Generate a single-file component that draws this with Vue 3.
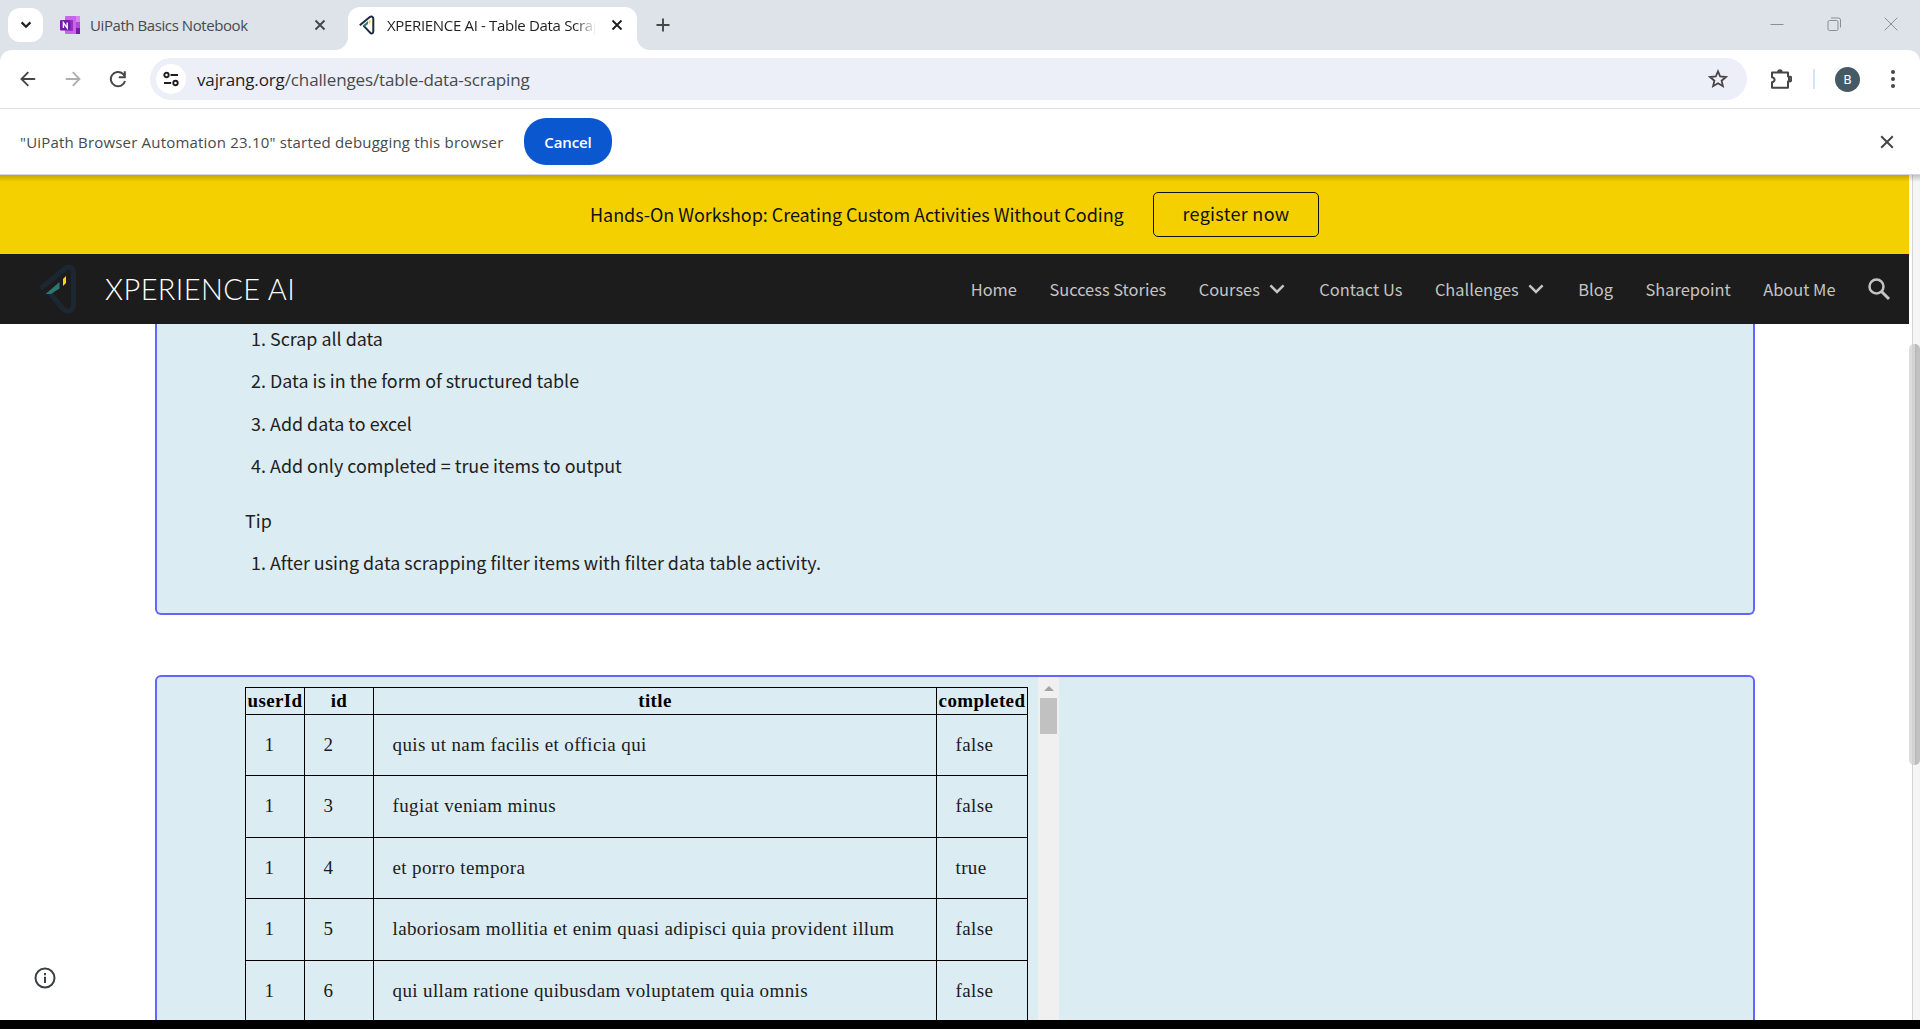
<script setup>
const menu = [
  { label: 'Home' },
  { label: 'Success Stories' },
  { label: 'Courses', more: true },
  { label: 'Contact Us' },
  { label: 'Challenges', more: true },
  { label: 'Blog' },
  { label: 'Sharepoint' },
  { label: 'About Me' },
]
const steps = [
  'Scrap all data',
  'Data is in the form of structured table',
  'Add data to excel',
  'Add only completed = true items to output',
]
const rows = [
  [1, 2, 'quis ut nam facilis et officia qui', false],
  [1, 3, 'fugiat veniam minus', false],
  [1, 4, 'et porro tempora', true],
  [1, 5, 'laboriosam mollitia et enim quasi adipisci quia provident illum', false],
  [1, 6, 'qui ullam ratione quibusdam voluptatem quia omnis', false],
]
</script>

<template>
  <div class="screen">
    <div class="tabs">
      <div class="tab-search">
        <svg width="12" height="12" viewBox="0 0 12 12"><path d="M1.600 3.400 6 7.800l4.400-4.400" fill="none" stroke="#1f1f1f" stroke-width="2.200" /></svg>
      </div>
      <div class="tab idle">
        <svg class="note" width="20" height="20" viewBox="0 0 20 20">
          <rect x="5" y="1" width="15" height="18" rx="1" fill="#ca64ea" />
          <rect x="16" y="1" width="4" height="6" fill="#d386ee" />
          <rect x="16" y="7" width="4" height="6" fill="#ae4bd5" />
          <rect x="16" y="13" width="4" height="6" fill="#7719aa" />
          <rect x="10" y="5" width="3" height="11" fill="#9332bf" />
          <rect x="0" y="5" width="10.500" height="10.500" rx="1" fill="#7719aa" />
          <path d="M3.400 13V7.600L7.200 13V7.600" fill="none" stroke="#fff" stroke-width="1.400" />
        </svg>
        <span class="tab-name">UiPath Basics Notebook</span>
        <svg class="x" width="12" height="12" viewBox="0 0 12 12"><path d="m1.500 1.500 9 9m0-9-9 9" stroke="#444746" stroke-width="1.900" /></svg>
      </div>
      <div class="tab active">
        <svg class="fav" width="17" height="20" viewBox="0 0 17 20">
          <path d="M.8 10.200 10.500 2.200C12.500.7 14.300 1.600 14.300 3.700v12.600c0 2.200-1.800 2.900-3.200 1.300L4.500 10.600" fill="none" stroke="#1d2b3a" stroke-width="2" />
          <path d="M3.500 10.800 9 6v3L5.500 11.800z" fill="#2f7f79" /><path d="m9.800 6 1.700-1.200v3L9.800 9z" fill="#f5d800" />
        </svg>
        <span class="tab-name">XPERIENCE AI - Table Data Scrap</span>
        <svg class="x" width="12" height="12" viewBox="0 0 12 12"><path d="m1.500 1.500 9 9m0-9-9 9" stroke="#1f1f1f" stroke-width="1.900" /></svg>
      </div>
      <svg class="plus" width="14" height="14" viewBox="0 0 14 14"><path d="M7 .5v13M.5 7h13" stroke="#444746" stroke-width="1.900" /></svg>
      <div class="window-buttons">
        <svg width="14" height="14" viewBox="0 0 14 14"><path d="M.5 7.500h13" stroke="#8b8e93" /></svg>
        <svg width="14" height="14" viewBox="0 0 14 14"><rect x="1" y="3.500" width="10" height="10" rx="1.500" fill="none" stroke="#8b8e93" /><path d="M4 1h7.500a2 2 0 0 1 2 2v7.500" fill="none" stroke="#8b8e93" /></svg>
        <svg width="14" height="14" viewBox="0 0 14 14"><path d="m.7.7 12.600 12.600m0-12.600L.7 13.300" stroke="#8b8e93" /></svg>
      </div>
    </div>

    <div class="toolbar">
      <svg class="back" width="16" height="16" viewBox="0 0 16 16"><path d="M15.200 8H1.500M8.300 1.200 1.500 8l6.800 6.800" fill="none" stroke="#444746" stroke-width="1.900" /></svg>
      <svg class="forward" width="16" height="16" viewBox="0 0 16 16"><path d="M.8 8h13.700M7.700 1.200 14.500 8l-6.800 6.800" fill="none" stroke="#aeafae" stroke-width="1.900" /></svg>
      <svg class="reload" width="18" height="18" viewBox="0 0 18 18"><path d="M16 11A7.200 7.200 0 1 1 14.100 4L15.500 5.500" fill="none" stroke="#444746" stroke-width="2" /><path d="M15.800 1.300v6h-6" fill="none" stroke="#444746" stroke-width="2" /></svg>
      <div class="address">
        <span class="site-info">
          <svg width="16" height="16" viewBox="0 0 16 16" fill="none" stroke="#1f1f1f" stroke-width="1.900"><circle cx="3.500" cy="4" r="2.200" /><path d="M7.500 4H15M1 12h7.200" /><circle cx="12.500" cy="12" r="2.200" /></svg>
        </span>
        <span class="url"><b>vajrang.org</b>/challenges/table-data-scraping</span>
        <svg class="star" width="20" height="20" viewBox="0 0 20 20"><path d="m10 2.300 2.200 5.200 5.700.5-4.300 3.700 1.300 5.500L10 14.300l-4.900 2.900 1.300-5.500L2.100 8l5.700-.5z" fill="none" stroke="#444746" stroke-width="1.800" /></svg>
      </div>
      <svg class="puzzle" width="22" height="22" viewBox="0 0 22 22"><path d="M2 4.500h16v4h1a2 2 0 0 1 0 5h-1v6.300H2v-5.600c3.400-.8 3.400-4.400 0-5z" fill="none" stroke="#444746" stroke-width="2" stroke-linejoin="round" /><path d="M7.200 4a2.700 2.700 0 0 1 5.400 0z" fill="#444746" /><path d="M18 8.800a2.500 2.500 0 0 1 0 5z" fill="#444746" /></svg>
      <span class="divider"></span>
      <span class="avatar">B</span>
      <svg class="dots" width="4" height="20" viewBox="0 0 4 20" fill="#444746"><circle cx="2" cy="3" r="2" /><circle cx="2" cy="10" r="2" /><circle cx="2" cy="17" r="2" /></svg>
    </div>

    <div class="infobar">
      <span class="message">"UiPath Browser Automation 23.10" started debugging this browser</span>
      <button class="cancel">Cancel</button>
      <svg class="dismiss" width="14" height="14" viewBox="0 0 14 14"><path d="m1.200 1.200 11.600 11.600m0-11.600L1.200 12.800" stroke="#444746" stroke-width="2" /></svg>
    </div>

    <div class="viewport">
      <div class="page">
        <div class="banner">
          <span class="workshop">Hands-On Workshop: Creating Custom Activities Without Coding</span>
          <a class="register">register now</a>
        </div>
        <nav class="nav">
          <svg class="logo" width="40" height="50" viewBox="0 0 40 50">
            <path d="M2.500 24.500 26.500 5C31 1.200 35.500 3.500 35.500 9v31c0 7-6 9.500-10.500 4.500L10.500 27.500" fill="none" stroke="#1d2733" stroke-width="5" />
            <path d="M7.500 30 21.500 18v6.500L13 30z" fill="#2f7572" /><path d="m25 15 3-3v7l-3 3z" fill="#f5d800" />
          </svg>
          <span class="brand">XPERIENCE AI</span>
          <div class="menu">
            <span v-for="m in menu" :key="m.label" class="item">{{ m.label }}<svg v-if="m.more" width="16" height="10" viewBox="0 0 16 10"><path d="m1.400 1.400 6.600 6.600 6.600-6.600" fill="none" stroke="#c4c4c4" stroke-width="2.500" /></svg></span>
            <svg width="23" height="23" viewBox="0 0 23 23"><circle cx="8.500" cy="8.500" r="7" fill="none" stroke="#c4c4c4" stroke-width="2.500" /><path d="m13.500 13.500 7.500 7.500" stroke="#c4c4c4" stroke-width="3" /></svg>
          </div>
        </nav>
        <section class="card brief">
          <ol><li v-for="(s, i) in steps" :key="s"><i>{{ i + 1 }}.</i>{{ s }}</li></ol>
          <p>Tip</p>
          <ol><li><i>1.</i><span class="tip">After using data scrapping filter items with filter data table activity.</span></li></ol>
        </section>
        <section class="card data">
          <table>
            <colgroup><col class="c1" /><col class="c2" /><col class="c3" /><col class="c4" /></colgroup>
            <thead><tr><th>userId</th><th>id</th><th>title</th><th>completed</th></tr></thead>
            <tbody><tr v-for="r in rows" :key="r[1]"><td v-for="(c, i) in r" :key="i">{{ c }}</td></tr></tbody>
          </table>
          <div class="inner-scroll">
            <svg width="10" height="5" viewBox="0 0 10 5"><path d="M0 5 5 0l5 5z" fill="#a3a3a3" /></svg>
            <span class="inner-thumb"></span>
          </div>
        </section>
        <svg class="info" width="22" height="22" viewBox="0 0 22 22"><circle cx="11" cy="11" r="9.500" fill="none" stroke="#3c4043" stroke-width="2" /><path d="M11 9.800V16M11 6v2.200" stroke="#3c4043" stroke-width="2" /></svg>
      </div>
      <div class="scrollbar"><span class="thumb"></span></div>
      <div class="shade"></div>
    </div>
    <div class="bottom"></div>
  </div>
</template>

<style>
html, body { margin: 0; overflow: hidden; }
</style>

<style scoped>
* { box-sizing: border-box; }
svg { display: block; flex: none; }
.screen { width: 1920px; height: 1029px; display: flex; flex-direction: column; overflow: hidden; background: #fff; font-family: "Open Sans", "Noto Sans", sans-serif; white-space: nowrap; }

.tabs { height: 50px; flex: none; display: flex; background: #dee2e9; }
.tab-search { width: 35px; height: 34px; margin: 8px 0 0 8px; border-radius: 12px; background: #fff; display: flex; align-items: center; justify-content: center; }
.tab { display: flex; align-items: center; font-size: 15px; }
.tab-name { flex: none; overflow: hidden; }
.idle { width: 305px; height: 50px; padding-left: 17px; color: #474a4d; }
.idle .tab-name { width: 224px; margin-left: 10px; letter-spacing: -.42px; }
.active { position: relative; width: 289px; height: 43px; margin-top: 7px; padding: 0 0 8px 11px; background: #fff; border-radius: 12px 12px 0 0; color: #1f1f1f; }
.active::before, .active::after { content: ""; position: absolute; bottom: 0; width: 13px; height: 13px; }
.active::before { left: -13px; background: radial-gradient(circle at 0 0, #dee2e9 12.500px, #fff 13.500px); }
.active::after { right: -13px; background: radial-gradient(circle at 100% 0, #dee2e9 12.500px, #fff 13.500px); }
.active .tab-name { width: 209px; margin-left: 11px; letter-spacing: -.33px; -webkit-mask-image: linear-gradient(90deg, #000 90%, transparent); mask-image: linear-gradient(90deg, #000 90%, transparent); }
.active .x { margin-left: 15px; }
.plus { margin: 18px 0 0 19px; }
.window-buttons { margin: 17px 22px 0 auto; display: flex; gap: 43px; }

.toolbar { position: relative; height: 59px; flex: none; display: flex; align-items: center; background: #fff; border-bottom: 1px solid #dfe0e3; }
.toolbar::before { content: ""; position: absolute; left: 0; right: 0; top: 0; height: 12px; background: radial-gradient(circle at 12px 12px, transparent 11.500px, #dee2e9 12.500px) left / 12px 12px no-repeat, radial-gradient(circle at 0 12px, transparent 11.500px, #dee2e9 12.500px) right / 12px 12px no-repeat; }
.back { margin-left: 20px; }
.forward { margin-left: 29px; }
.reload { margin-left: 28px; }
.address { width: 1597px; height: 42px; margin-left: 23px; padding: 0 19px 0 6px; border-radius: 21px; background: #eceef8; display: flex; align-items: center; }
.site-info { width: 30px; height: 30px; border-radius: 50%; background: #fff; display: flex; align-items: center; justify-content: center; }
.url { margin-left: 11px; font-size: 17px; letter-spacing: -.13px; color: #474a4d; }
.url b { font-weight: 400; color: #1f1f1f; }
.star { margin-left: auto; }
.puzzle { margin-left: 23px; }
.divider { width: 2px; height: 20px; margin-left: 21px; background: #d3e3fd; }
.avatar { width: 25px; height: 25px; margin-left: 20px; border-radius: 50%; background: #455a64; color: #fff; font: 13px/25px Roboto, sans-serif; text-align: center; }
.dots { margin-left: 30.500px; }

.infobar { height: 66px; flex: none; display: flex; align-items: center; padding: 0 26px 0 20px; background: #fff; border-bottom: 1px solid #d5d7dc; }
.message { width: 504px; font-size: 15px; letter-spacing: .19px; color: #474a4d; }
.cancel { width: 88px; height: 47px; border: 0; border-radius: 22px; background: #0b57d0; color: #fff; font: 600 15px "Open Sans", sans-serif; letter-spacing: -.1px; }
.dismiss { margin-left: auto; }

.viewport { position: relative; height: 845px; flex: none; display: flex; }
.shade { position: absolute; left: 0; right: 0; top: 0; height: 7px; background: linear-gradient(rgba(0, 0, 0, .2), transparent); }
.page { position: relative; width: 1909px; height: 845px; overflow: hidden; font-family: "Noto Sans CJK SC", sans-serif; }
.banner { height: 79px; background: #f5d000; display: flex; align-items: center; padding-left: 590px; color: #111; font-size: 18px; }
.workshop { width: 563px; padding-bottom: 2px; letter-spacing: -.05px; }
.register { width: 166px; height: 45px; border: 1px solid #111; border-radius: 5px; line-height: 40px; text-align: center; letter-spacing: .3px; }
.nav { height: 70px; display: flex; align-items: center; padding: 0 18px 0 38px; background: #1c1c1c; }
.brand { margin: -1px 0 0 27px; color: #fff; font: 300 29px Lato, sans-serif; letter-spacing: .4px; }
.menu { margin-left: auto; display: flex; align-items: center; gap: 32.500px; color: #c4c4c4; font-size: 16.430px; }
.item { display: flex; align-items: center; gap: 9px; }
.item svg { margin-right: 2px; }
.card { width: 1600px; margin-left: 155px; border: 2px solid #6464ff; border-radius: 6px; background: #dcecf3; color: #212121; }
.brief { height: 291px; border-top: 0; border-radius: 0 0 6px 6px; padding-left: 88px; font-size: 17.900px; }
ol { margin: 0; padding: 0; list-style: none; }
li { height: 42.400px; line-height: 29px; padding-left: 6px; display: flex; }
i { width: 19px; font-style: normal; }
p { margin: 11px 0 13px; line-height: 30px; }
.data { height: 400px; margin-top: 60px; padding-left: 88px; display: flex; align-items: flex-start; }
table { width: 783px; margin-top: 10px; border-collapse: separate; border-spacing: 0; table-layout: fixed; border-left: 1px solid #000; border-top: 1px solid #000; font: 19px "Liberation Serif", serif; letter-spacing: .38px; color: #1b1b1b; }
.c1 { width: 59px; } .c2 { width: 69px; } .c3 { width: 563px; } .c4 { width: 91px; }
th, td { border-right: 1px solid #000; border-bottom: 1px solid #000; text-align: left; }
th { height: 27px; padding: 0; text-align: center; color: #000; line-height: 22px; }
td { height: 61px; padding: 0 0 1px 18.500px; }
tr:nth-child(even) td { height: 62px; }
.inner-scroll { width: 21px; height: 400px; margin-left: 10px; background: #f0f0f0; display: flex; flex-direction: column; align-items: center; }
.inner-scroll svg { margin-top: 9px; }
.inner-thumb { width: 17px; height: 36px; margin-top: 7px; background: #c1c1c1; }
.info { position: absolute; left: 34px; top: 792px; }
.scrollbar { position: relative; width: 11px; height: 845px; background: linear-gradient(90deg, #fff 3px, #d4d4d4 3px, #d4d4d4 4px, #f5f5f5 4px); }
.thumb { position: absolute; left: 0; top: 169px; width: 11px; height: 421px; border-radius: 5px; background: linear-gradient(90deg, #dcdcdc 3px, #d0d0d0 3px, #d6d6d6 6px, #b4b4b4 6px, #c1c1c1 8px); }
.bottom { flex: 1; background: #000; }
</style>
